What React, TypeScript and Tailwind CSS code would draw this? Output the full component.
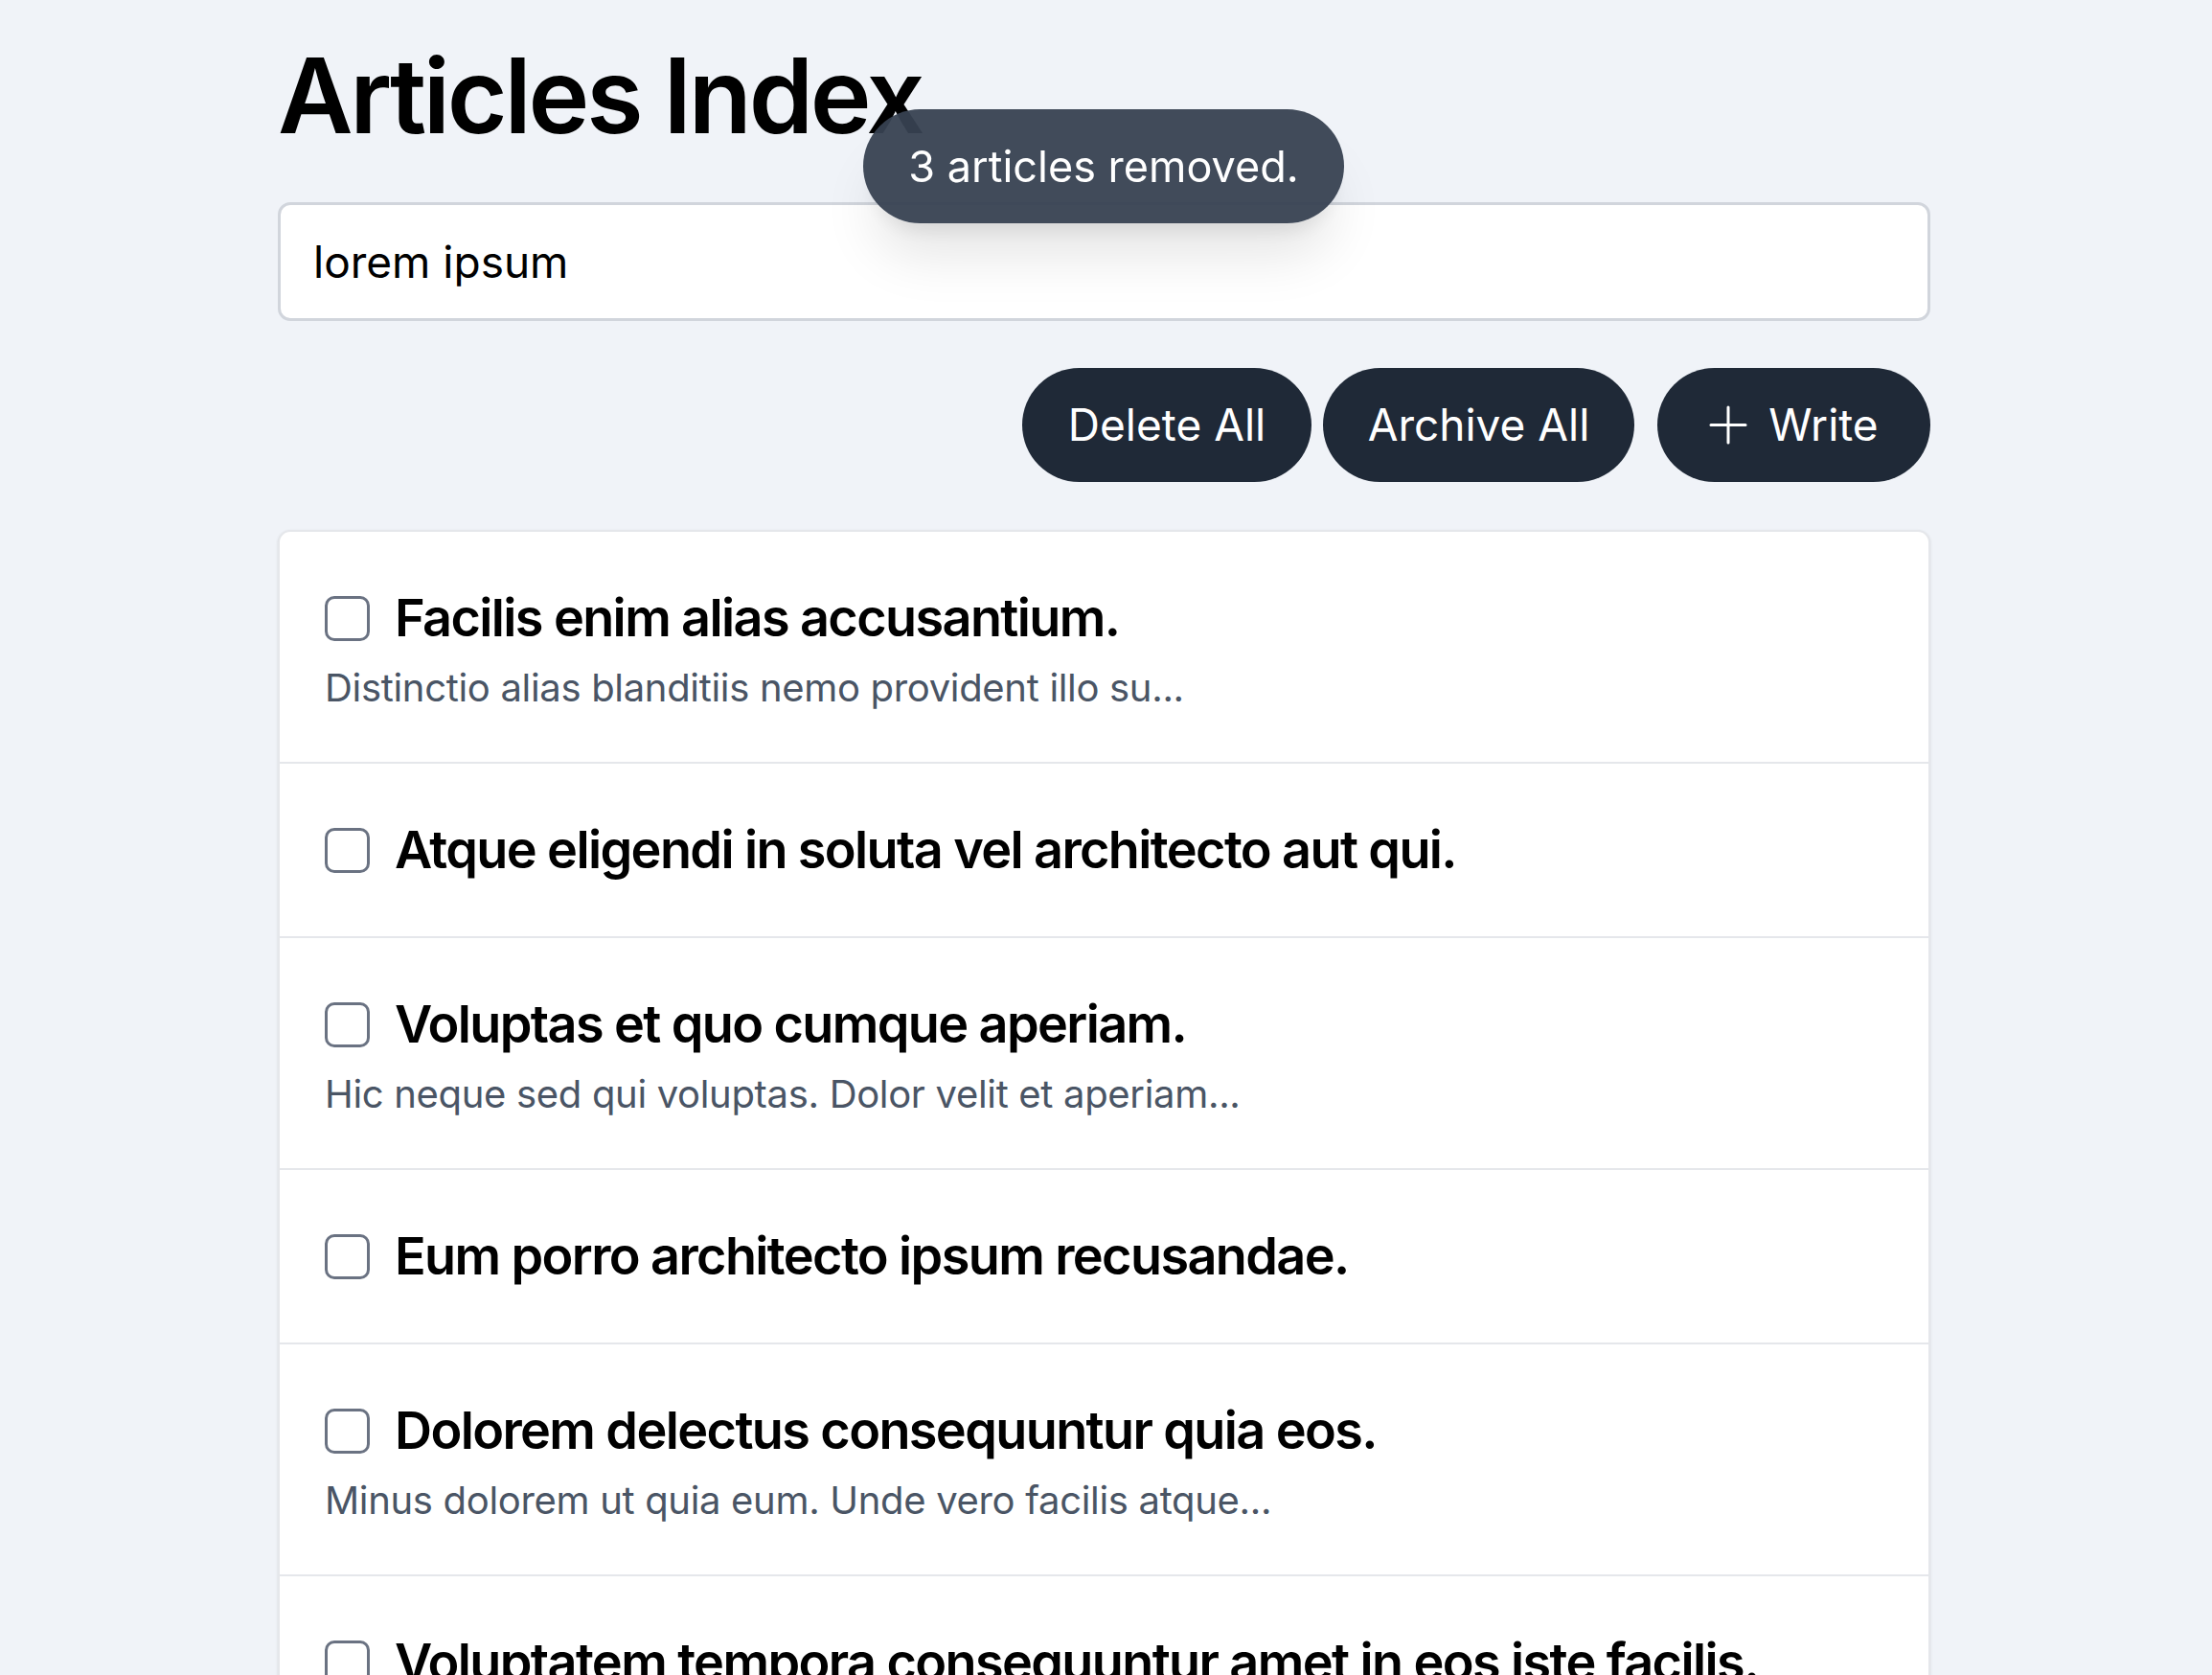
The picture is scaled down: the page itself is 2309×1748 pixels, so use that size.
import React from 'react';

type Article = {
  id: number;
  title: string;
  excerpt?: string;
};

const articles: Article[] = [
  { id: 1, title: 'Facilis enim alias accusantium.', excerpt: 'Distinctio alias blanditiis nemo provident illo su...' },
  { id: 2, title: 'Atque eligendi in soluta vel architecto aut qui.' },
  { id: 3, title: 'Voluptas et quo cumque aperiam.', excerpt: 'Hic neque sed qui voluptas. Dolor velit et aperiam...' },
  { id: 4, title: 'Eum porro architecto ipsum recusandae.' },
  { id: 5, title: 'Dolorem delectus consequuntur quia eos.', excerpt: 'Minus dolorem ut quia eum. Unde vero facilis atque...' },
  { id: 6, title: 'Voluptatem tempora consequuntur amet in eos iste facilis.', excerpt: 'Quis sit dolorem et eum. Ut ipsa nihil sapiente...' },
  { id: 7, title: 'Sint quia est dolores odit.' },
];

function PlusIcon() {
  return (
    <svg width="40" height="41" viewBox="0 0 40 41" fill="none" stroke="currentColor" strokeWidth="3" strokeLinecap="round">
      <line x1="20" y1="2" x2="20" y2="39" />
      <line x1="2" y1="20.5" x2="38" y2="20.5" />
    </svg>
  );
}

function ArticleRow({ article }: { article: Article }) {
  return (
    <li className="px-[47px] py-[54px] border-b-2 border-gray-200 last:border-b-0">
      <div className="flex items-center gap-[26px] h-[72px]">
        <input
          type="checkbox"
          className="appearance-none shrink-0 w-[47px] h-[47px] rounded-[10px] border-[3px] border-gray-500 bg-white"
        />
        <h2 className="text-[54px] leading-[72px] font-semibold tracking-[-0.03em] text-black whitespace-nowrap">
          {article.title}
        </h2>
      </div>
      {article.excerpt && (
        <p className="mt-[13px] text-[40px] leading-[47px] tracking-[-0.008em] text-gray-600">
          {article.excerpt}
        </p>
      )}
    </li>
  );
}

export default function App() {
  return (
    <div className="min-h-screen bg-[#f0f3f8] font-['Inter',sans-serif] text-black">
      {/* toast */}
      <div className="fixed top-[114px] left-[901px] z-50 h-[119px] w-[502px] flex items-center justify-center rounded-full bg-[#374151]/95 text-white text-[45px] whitespace-nowrap shadow-[0_45px_56px_-11px_rgba(0,0,0,0.1),0_18px_22px_-13px_rgba(0,0,0,0.1)]">
        3 articles removed.
      </div>

      <div className="ml-[290px] w-[1725px] pt-[46px] pb-[120px]">
        <h1 className="text-[108px] leading-none font-semibold tracking-[-0.03em]">Articles Index</h1>

        <input
          type="text"
          readOnly
          value="lorem ipsum"
          className="mt-[57px] block w-full h-[124px] rounded-[13px] border-[3px] border-gray-300 bg-white px-[34px] text-[46px] text-black outline-none"
        />

        <div className="mt-[49px] flex justify-end items-center">
          <button className="h-[119px] w-[302px] rounded-full bg-[#1f2937] text-white text-[46px] flex items-center justify-center">
            Delete All
          </button>
          <button className="ml-[12px] h-[119px] w-[325px] rounded-full bg-[#1f2937] text-white text-[46px] flex items-center justify-center">
            Archive All
          </button>
          <button className="ml-[24px] h-[119px] w-[285px] rounded-full bg-[#1f2937] text-white text-[46px] flex items-center justify-center gap-[22px]">
            <PlusIcon />
            Write
          </button>
        </div>

        <ul className="mt-[50px] rounded-[13px] border-2 border-gray-200 bg-white shadow-sm overflow-hidden">
          {articles.map((a) => (
            <ArticleRow key={a.id} article={a} />
          ))}
        </ul>
      </div>
    </div>
  );
}
